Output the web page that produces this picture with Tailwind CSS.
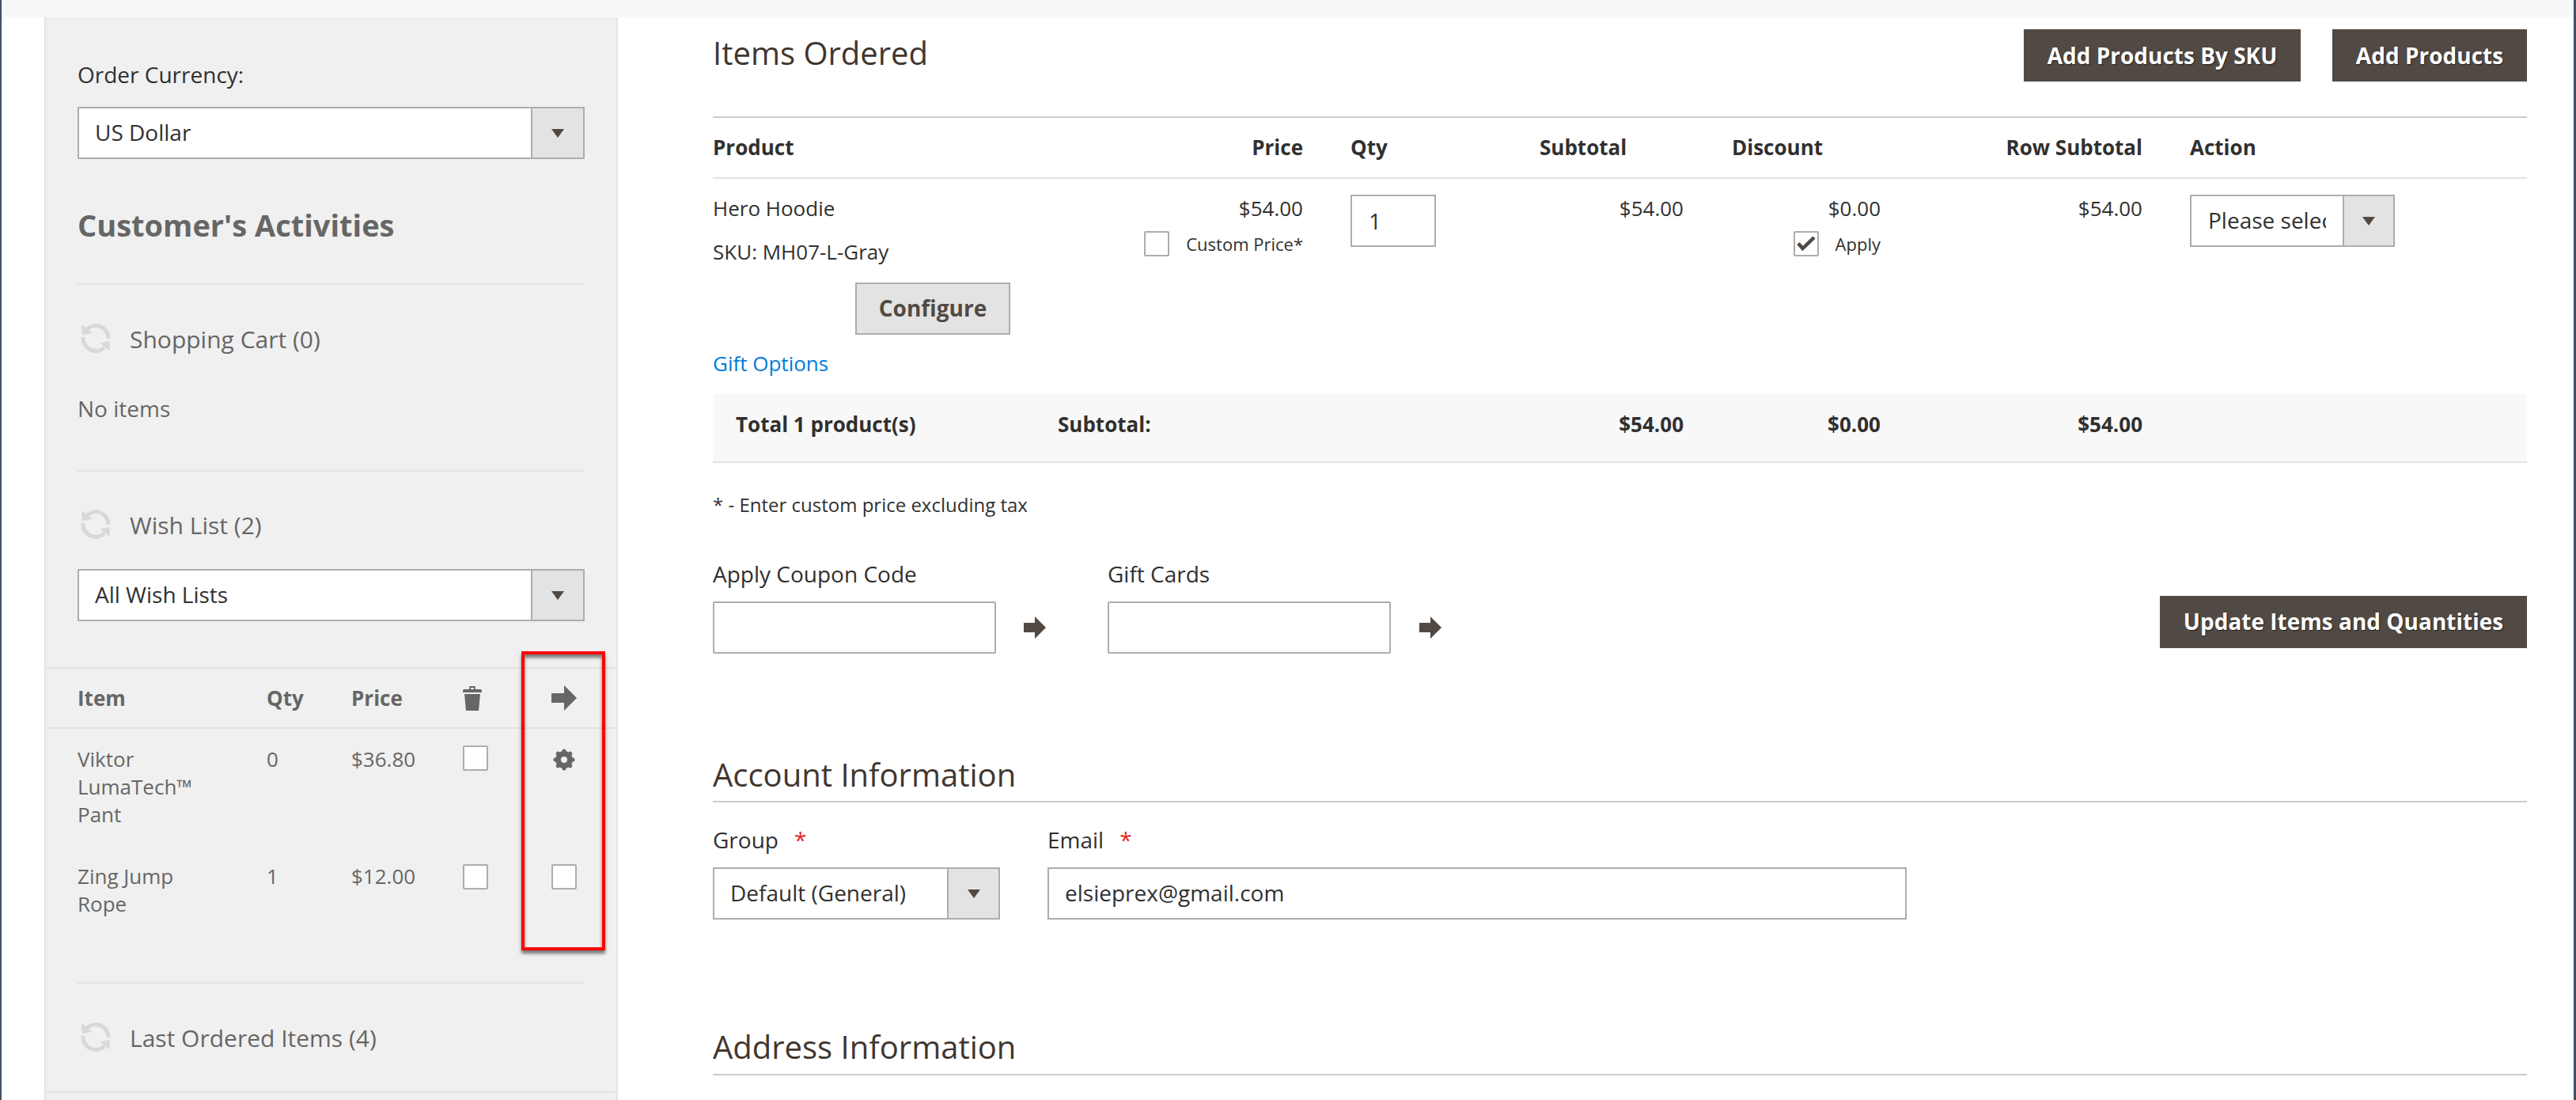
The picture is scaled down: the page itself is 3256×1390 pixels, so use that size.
<!DOCTYPE html>
<html><head><meta charset="utf-8"><title>Order</title>
<script src="https://cdn.jsdelivr.net/npm/@tailwindcss/browser@4"></script>
</head>
<body class="w-[3256px] h-[1390px] overflow-hidden bg-white font-['Open_Sans',sans-serif] text-[28px] text-[#303030]">
<div class="h-[1390px] border-l-2 border-r-[3px] border-[#41505f] overflow-hidden">
<div class="h-[22px] bg-[#f8f8f8]"></div>
<div class="flex pl-[54px]">
<aside class="w-[725px] h-[1368px] shrink-0 bg-[#f0f0f0] border-x-2 border-[#e3e3e3] text-[#666666]">
<div class="px-10">
<div class="mt-[54px] h-9 leading-9 text-[#303030]">Order Currency:</div>
<div class="mt-[23px] flex h-[66px] border-2 border-[#adadad] bg-white text-[#303030]">
<div class="flex-1 pl-5 leading-[60px]">US Dollar</div>
<div class="w-[66px] flex items-center justify-center border-l-2 border-[#adadad] bg-[#e3e3e3]"><svg width="16" height="11" viewBox="0 0 16 11"><polygon points="0,0 16,0 8,11" fill="#514943"/></svg></div>
</div>
<div class="mt-[58px] h-[50px] leading-[50px] text-[38px] font-bold text-[#666666]">Customer's Activities</div>
<div class="mt-[49px] h-0.5 bg-[#e3e3e3]"></div>
<div class="mt-[48px] flex items-center h-10"><svg class="ml-1 w-[38px] h-10" viewBox="0 0 38 40" fill="none"><path d="M8 8A16 16 0 0 1 35 19.500M3 18A16 16 0 0 0 30 31" stroke="#d8d8d8" stroke-width="5"/><polygon points="1,2 2,15 15,13" fill="#d8d8d8"/><polygon points="36.500,35 36.500,23 24.500,25.500" fill="#d8d8d8"/></svg><span class="ml-6 text-[30px]">Shopping Cart (0)</span></div>
<div class="mt-[50px] h-9 leading-9">No items</div>
<div class="mt-[60px] h-0.5 bg-[#e3e3e3]"></div>
<div class="mt-[47px] flex items-center h-10"><svg class="ml-1 w-[38px] h-10" viewBox="0 0 38 40" fill="none"><path d="M8 8A16 16 0 0 1 35 19.500M3 18A16 16 0 0 0 30 31" stroke="#d8d8d8" stroke-width="5"/><polygon points="1,2 2,15 15,13" fill="#d8d8d8"/><polygon points="36.500,35 36.500,23 24.500,25.500" fill="#d8d8d8"/></svg><span class="ml-6 text-[30px]">Wish List (2)</span></div>
<div class="mt-9 flex h-[66px] border-2 border-[#adadad] bg-white text-[#303030]">
<div class="flex-1 pl-5 leading-[60px]">All Wish Lists</div>
<div class="w-[66px] flex items-center justify-center border-l-2 border-[#adadad] bg-[#e3e3e3]"><svg width="16" height="11" viewBox="0 0 16 11"><polygon points="0,0 16,0 8,11" fill="#514943"/></svg></div>
</div>
</div>
<div class="relative mt-[58px]">
<div class="grid grid-cols-[239px_107px_141px_112px_1fr] h-[78px] pl-10 items-center border-y-2 border-[#e3e3e3] text-[26px] font-bold">
<div>Item</div><div>Qty</div><div>Price</div>
<svg class="w-6 h-8" viewBox="0 0 24 32"><path d="M8 5V2.500Q8 1 9.500 1h5Q16 1 16 2.500V5h6q2 0 2 2v2H0V7q0-2 2-2zM10 3v2h4V3z" fill-rule="evenodd" fill="#666"/><path d="M2 11h20l-2 21H4z" fill="#666"/></svg>
<svg class="w-8 h-8" viewBox="0 0 32 32"><polygon points="0,10 16,10 16,0 32,16 16,32 16,22 0,22" fill="#666"/></svg>
</div>
<div class="grid grid-cols-[239px_107px_141px_112px_1fr] pl-10 text-[26px] leading-[35px]">
<div class="pt-[21px] pr-[60px]">Viktor LumaTech™ Pant</div><div class="pt-[21px]">0</div><div class="pt-[21px]">$36.80</div>
<div class="pt-[21px]"><div class="w-8 h-8 border-2 border-[#adadad] rounded-[2px] bg-white"></div></div>
<div class="pt-[25px]"><svg class="ml-[2px] w-7 h-7" viewBox="0 0 28 28" fill="none" stroke="#666"><circle cx="14" cy="14" r="7.500" stroke-width="7"/><g stroke-width="5" stroke-linecap="round"><path d="M14 3V6M14 22V25M3 14H6M22 14H25"/><path transform="rotate(45 14 14)" d="M14 3V6M14 22V25M3 14H6M22 14H25"/></g></svg></div>
<div class="pt-[43px] pr-[60px]">Zing Jump Rope</div><div class="pt-[43px]">1</div><div class="pt-[43px]">$12.00</div>
<div class="pt-[45px]"><div class="w-8 h-8 border-2 border-[#adadad] rounded-[2px] bg-white"></div></div>
<div class="pt-[45px]"><div class="w-8 h-8 border-2 border-[#adadad] rounded-[2px] bg-white"></div></div>
</div>
<div class="absolute left-[601px] top-[-20px] w-[106px] h-[378px] border-4 border-[#ff0000] shadow-[0_4px_4px_rgba(0,0,0,0.5),inset_0_4px_4px_rgba(0,0,0,0.5)]"></div>
</div>
<div class="px-10">
<div class="mt-[81px] h-0.5 bg-[#e3e3e3]"></div>
<div class="mt-[48px] flex items-center h-10"><svg class="ml-1 w-[38px] h-10" viewBox="0 0 38 40" fill="none"><path d="M8 8A16 16 0 0 1 35 19.500M3 18A16 16 0 0 0 30 31" stroke="#d8d8d8" stroke-width="5"/><polygon points="1,2 2,15 15,13" fill="#d8d8d8"/><polygon points="36.500,35 36.500,23 24.500,25.500" fill="#d8d8d8"/></svg><span class="ml-6 text-[30px]">Last Ordered Items (4)</span></div>
</div>
<div class="mt-[48px] h-0.5 bg-[#e3e3e3]"></div>
</aside>
<main class="ml-[120px] w-[2293px] shrink-0 pt-[15px]">
<div class="flex justify-between items-start h-[66px]">
<h2 class="h-[60px] leading-[60px] text-[40px] font-normal text-[#41362f]">Items Ordered</h2>
<div class="flex gap-10 font-bold text-white [text-shadow:1px_1px_1px_rgba(0,0,0,0.6)]">
<div class="w-[350px] h-[66px] bg-[#514943] leading-[66px] text-center">Add Products By SKU</div>
<div class="w-[246px] h-[66px] bg-[#514943] leading-[66px] text-center">Add Products</div>
</div>
</div>
<div class="mt-11 border-t-2 border-b-2 border-t-[#cccccc] border-b-[#e3e3e3] h-[79px] grid grid-cols-[440px_306px_299px_182px_249px_331px_486px] items-center text-[26px] font-bold">
<div>Product</div><div class="text-right">Price</div><div class="pl-[60px]">Qty</div><div>Subtotal</div><div class="pl-[61px]">Discount</div><div class="text-right">Row Subtotal</div><div class="pl-[60px]">Action</div>
</div>
<div class="grid grid-cols-[440px_306px_299px_182px_249px_331px_486px] text-[26px] leading-9">
<div class="pt-[19px]">
<div>Hero Hoodie</div>
<div class="mt-[19px]">SKU: MH07-L-Gray</div>
<div class="mt-[21px] ml-[180px] w-[196px] h-[66px] border-2 border-[#adadad] bg-[#e3e3e3] text-[28px] font-bold text-[#514943] text-center leading-[60px]">Configure</div>
<div class="mt-[18px] text-[#007bdb]">Gift Options</div>
</div>
<div class="pt-[19px] text-right">$54.00
<div class="mt-[11px] flex justify-end items-center gap-[21px] text-[22px] leading-8"><div class="w-8 h-8 border-2 border-[#adadad] rounded-[2px] bg-white"></div>Custom Price*</div>
</div>
<div class="pt-5 pl-[60px]"><div class="w-[108px] h-[66px] border-2 border-[#adadad] pl-[21px] text-[28px] leading-[62px]">1</div></div>
<div class="pt-[19px] text-right">$54.00</div>
<div class="pt-[19px] text-right">$0.00
<div class="mt-[11px] flex justify-end items-center gap-[21px] text-[22px] leading-8"><div class="w-8 h-8 border-2 border-[#adadad] rounded-[2px] bg-white"><svg width="28" height="28" viewBox="0 0 28 28"><path d="M4 13.500l5.500 6.500L24 6" fill="none" stroke="#514943" stroke-width="4.500"/></svg></div>Apply</div>
</div>
<div class="pt-[19px] text-right">$54.00</div>
<div class="pt-5 pl-[60px]">
<div class="flex w-[259px] h-[66px] border-2 border-[#adadad] text-[28px]"><div class="w-[191px] pl-[21px] pr-[21px]"><div class="overflow-hidden whitespace-nowrap leading-[60px]">Please select</div></div><div class="flex-1 flex items-center justify-center border-l-2 border-[#adadad] bg-[#e3e3e3]"><svg width="16" height="11" viewBox="0 0 16 11"><polygon points="0,0 16,0 8,11" fill="#514943"/></svg></div></div>
</div>
</div>
<div class="mt-[21px] h-[87px] pb-2 bg-[#f8f8f8] border-b-2 border-[#e3e3e3] grid grid-cols-[440px_306px_299px_182px_249px_331px_486px] items-center text-[26px] font-bold">
<div class="pl-[29px]">Total 1 product(s)</div><div class="-ml-1">Subtotal:</div><div></div><div class="text-right">$54.00</div><div class="text-right">$0.00</div><div class="text-right">$54.00</div><div></div>
</div>
<div class="mt-[35px] h-9 leading-9 text-[24px]">* - Enter custom price excluding tax</div>
<div class="mt-[51px] flex justify-between items-start">
<div class="flex">
<div class="w-[499px]"><div class="h-9 leading-9">Apply Coupon Code</div><div class="mt-[17px] flex items-center"><div class="w-[358px] h-[66px] border-2 border-[#adadad] rounded-[2px]"></div><svg class="ml-[35px] w-7 h-7" viewBox="0 0 28 28"><polygon points="0,8 14,8 14,0 28,14 14,28 14,20 0,20" fill="#514943"/></svg></div></div>
<div class="w-[500px]"><div class="h-9 leading-9">Gift Cards</div><div class="mt-[17px] flex items-center"><div class="w-[358px] h-[66px] border-2 border-[#adadad] rounded-[2px]"></div><svg class="ml-9 w-7 h-7" viewBox="0 0 28 28"><polygon points="0,8 14,8 14,0 28,14 14,28 14,20 0,20" fill="#514943"/></svg></div></div>
</div>
<div class="mt-[46px] w-[464px] h-[66px] bg-[#514943] leading-[64px] text-center font-bold text-white [text-shadow:1px_1px_1px_rgba(0,0,0,0.6)]">Update Items and Quantities</div>
</div>
<h2 class="mt-[123px] h-[60px] leading-[60px] text-[40px] font-normal text-[#41362f]">Account Information</h2>
<div class="mt-[3px] h-0.5 bg-[#cccccc]"></div>
<div class="mt-[29px] flex">
<div class="w-[423px]"><div class="h-9 leading-9">Group<span class="ml-5 text-[#e22626]">*</span></div>
<div class="mt-[17px] flex w-[363px] h-[66px] border-2 border-[#adadad]"><div class="w-[294px] pl-5 leading-[60px]">Default (General)</div><div class="flex-1 flex items-center justify-center border-l-2 border-[#adadad] bg-[#e3e3e3]"><svg width="16" height="11" viewBox="0 0 16 11"><polygon points="0,0 16,0 8,11" fill="#514943"/></svg></div></div></div>
<div><div class="h-9 leading-9">Email<span class="ml-5 text-[#e22626]">*</span></div>
<div class="mt-[17px] w-[1086px] h-[66px] border-2 border-[#adadad] pl-5 leading-[60px]">elsieprex@gmail.com</div></div>
</div>
<h2 class="mt-[131px] h-[60px] leading-[60px] text-[40px] font-normal text-[#41362f]">Address Information</h2>
<div class="mt-1 h-0.5 bg-[#cccccc]"></div>
</main>
</div>
</div>
</body></html>
